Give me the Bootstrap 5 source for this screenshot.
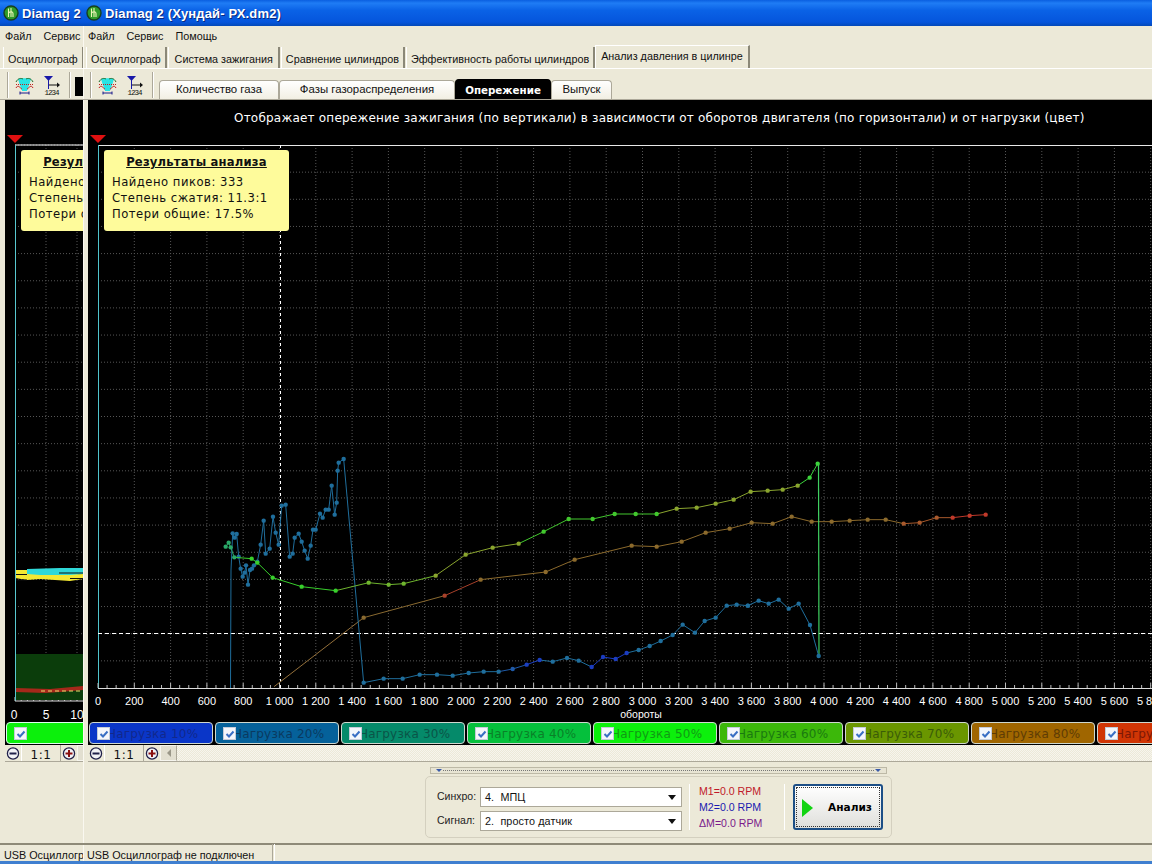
<!DOCTYPE html>
<html lang="ru">
<head>
<meta charset="utf-8">
<title>Diamag 2</title>
<link href="https://cdn.jsdelivr.net/npm/bootstrap@5.3.0/dist/css/bootstrap.min.css" rel="stylesheet">
<style>
html,body{height:100%;margin:0;overflow:hidden;background:#ece9d8;}
body{font-family:"Liberation Sans",Arial,sans-serif;font-size:10.8px;color:#111;}
.desk{width:1152px;height:864px;}
.winback{width:83px;flex:none;overflow:hidden;}
.winfront{width:1069px;flex:none;overflow:hidden;box-shadow:inset 1px 0 #faf8f0;}
.winback .inner{width:1069px;}
.titlebar{height:26px;background:linear-gradient(#0a5fe0 0,#1f7cf5 12%,#0a62e6 40%,#0555dc 85%,#0349b8 100%);color:#fff;font:bold 13px "Liberation Sans",sans-serif;letter-spacing:.15px;text-shadow:1px 1px #0a2a80;padding-left:3px;gap:3px;white-space:nowrap;}
.menubar{height:20px;padding-left:5px;gap:12px;white-space:nowrap;}
.tabrow{height:23px;border-bottom:1px solid #fff;padding:0 0 0 3px;align-items:flex-end;flex-wrap:nowrap;white-space:nowrap;}
.wintab{height:21px;padding:3px 4px 0;display:flex;align-items:center;border-left:1px solid #fff;border-right:2px solid #8b8878;margin-right:1px;background:#ece9d8;}
.wintab.roomy{padding:3px 5px 0 6px;}
.wintab.on{height:23px;margin-left:-1px;padding:0 5px 1px 5px;background:#ece9d8;border-top:1px solid #fff;}
.toolrow{height:31px;padding:2px 0 0 7px;border-bottom:1px solid #aca899;position:relative;}
.gripline{width:2px;height:26px;background:#aca899;border-right:1px solid #fff;flex:none;}
.tbicons{gap:9px;padding:0 8px 0 6px;}
.subtab{height:19px;align-self:flex-end;border:1px solid #aca899;border-bottom:0;border-radius:4px 4px 0 0;background:linear-gradient(#fff,#f2efe3);display:flex;align-items:center;justify-content:center;white-space:nowrap;font-size:11.4px;}
.subtab.on{background:#000;color:#fff;font:bold 10.3px "DejaVu Sans",sans-serif;height:20px;border-color:#000;}
.chartpane{height:645px;background:#000;margin-left:5px;position:relative;}
.capline{height:45px;color:#fff;font:12px "DejaVu Sans",sans-serif;letter-spacing:.21px;padding:11px 0 0 146px;white-space:nowrap;}
.plotsvg{display:block;overflow:visible;}
.resultbox{position:absolute;left:16px;top:50px;width:185px;height:81px;background:#fefb9b;border-radius:3px;color:#111;font:11.6px/16px "DejaVu Sans",sans-serif;padding:4px 8px;letter-spacing:.5px;white-space:nowrap;}
.resulthead{font-weight:bold;text-decoration:underline;text-align:center;margin-bottom:4px;letter-spacing:.2px;}
.legendrow{height:23px;position:absolute;left:1px;right:0;top:622px;gap:2px;overflow:hidden;white-space:nowrap;}
.loadtab{width:124px;height:22px;flex:none;border:1px solid #cfd8cf;border-radius:4px;position:relative;padding-left:17px;font:12px/22px "DejaVu Sans",sans-serif;letter-spacing:.2px;}
.tick{position:absolute;left:7px;top:4px;width:13px;height:13px;background:#f4f6fb;border:1px solid #c4cbd8;}
.tick svg{display:block;margin:.5px;}
.zoomrow{height:17px;border-bottom:1px solid #aca899;margin-left:5px;background:repeating-conic-gradient(#f7f5ee 0 25%,#ece9d8 0 50%) 0 0/2px 2px;}
.zbtn{width:16px;height:16px;background:#ece9d8;flex:none;}
.zlabel{width:40px;height:16px;overflow:hidden;text-align:center;border-left:1px solid #fff;border-right:1px solid #aca899;background:#ece9d8;font:12px/20px "DejaVu Sans",sans-serif;letter-spacing:.5px;}
.zarrow{width:17px;height:16px;background:#e2dfd0;border:1px solid #f6f5ee;border-right-color:#aca899;flex:none;}
.lowerzone{height:80px;position:relative;}
.splitbar{position:absolute;left:347px;top:5px;width:457px;height:7px;background:#e7e4d3;border:1px solid #bdb9a6;}
.splitdots{position:absolute;left:12px;right:12px;top:2px;border-top:1px dotted #777;}
.ctrlgroup{position:absolute;left:342px;top:14px;width:467px;height:62px;border:1px solid #d4d0bf;border-radius:5px;}
.fieldlabel{font-size:10.5px;width:43px;color:#222;}
.dropbox{width:202px;height:20px;background:#fff;border:1px solid #aca899;padding-left:4px;font-size:10.8px;letter-spacing:.1px;position:relative;display:flex;align-items:center;}
.droparrow{position:absolute;right:5px;top:7px;width:0;height:0;border:4px solid transparent;border-top:5px solid #111;border-bottom:0;}
.sepv{width:1px;height:46px;background:#cfcbb8;border-right:1px solid #fff;flex:none;}
.rpmline{font-size:10.6px;line-height:16px;white-space:nowrap;}
.runbtn{width:90px;height:46px;border:2px solid #1d4f86;border-radius:3px;background:linear-gradient(#fff,#dfdfdb);font:bold 10.6px "DejaVu Sans",sans-serif;color:#000;outline:1px dotted #333;outline-offset:-4px;padding:0;position:relative;}
.playmark{position:absolute;left:7px;top:13px;width:0;height:0;border-left:11px solid #12d412;border-top:9px solid transparent;border-bottom:9px solid transparent;}
.statusrow{position:absolute;left:0;top:843px;width:1152px;height:19px;border-top:2px solid #8e8a78;}
.statuscell{height:17px;line-height:21px;white-space:nowrap;}
.statusend{position:absolute;left:0;top:861px;width:1152px;height:3px;background:#3f7fd0;}
</style>
</head>
<body>
<div class="desk d-flex position-relative">

<!-- window behind -->
<section class="winback">
<div class="inner">
  <div class="titlebar d-flex align-items-center">
    <svg width="16" height="16" viewBox="0 0 16 16"><use href="#icoLogo"/></svg>
    <span>Diamag 2</span>
  </div>
  <div class="menubar d-flex align-items-center"><span>Файл</span><span>Сервис</span></div>
  <ul class="nav tabrow"><li class="wintab">Осциллограф</li></ul>
  <div class="toolrow d-flex align-items-center">
    <span class="gripline"></span>
    <span class="d-flex tbicons align-items-center">
      <svg width="19" height="19" viewBox="0 0 19 19"><use href="#icoMeter"/></svg>
      <svg width="18" height="19" viewBox="0 0 18 19"><use href="#icoScale"/></svg>
    </span>
    <span class="gripline"></span>
    <span class="d-block bg-black ms-1" style="width:12px;height:19px;margin-top:3px"></span>
  </div>
  <div class="chartpane overflow-hidden" id="backPane">
    <svg class="plotsvg position-absolute top-0 start-0" width="78" height="622" viewBox="5 100 78 622">
      <g id="backGrid"></g>
      <polygon points="15,571 27,570 27,569 60,568 83,568 83,574 70,576 40,577 15,576" fill="#2fd8d8"/>
      <polygon points="15,570 27,570 27,574 40,575 70,575 83,574 83,579 70,581 40,579 27,580 15,578" fill="#f4e832"/>
      <rect x="15" y="654" width="68" height="46" fill="#0b3d0b"/>
      <polygon points="15,688 50,689 83,686 83,690 60,692 45,693 15,692" fill="#a5281a"/>
      <path d="M15 574.5H27M59 573H83M15 580H27M70 578.5H83" stroke="#111"/>
      <path d="M41 691H83" stroke="#e8e070" stroke-dasharray="4 3"/>
      <path d="M15 145H83" stroke="#fff"/>
      <path d="M15.5 145V701" stroke="#58c8d0"/>
      <path d="M15 701H83" stroke="#ddd"/>
      <polygon points="7,135 23,135 15,143" fill="#e01010"/>
      <g fill="#fff" font-family="Liberation Sans" font-size="12" text-anchor="middle"><text x="14" y="719">0</text><text x="46" y="719">5</text><text x="77" y="719">10</text></g>
    </svg>
    <div class="resultbox" style="left:16px">
      <div class="resulthead">Результаты анализа</div>
      <div>Найдено пиков: 333</div><div>Степень сжатия: 11.3:1</div><div>Потери общие: 17.5%</div>
    </div>
    <div class="legendrow d-flex"><div class="loadtab" style="background:#0cf00c;border-color:#dfe"><span class="tick"><svg width="10" height="10" viewBox="0 0 10 10"><path d="M1.5 5l2.5 2.5L8.5 2.5" fill="none" stroke="#3a6fc4" stroke-width="2"/></svg></span></div></div>
  </div>
  <div class="zoomrow d-flex">
    <span class="zbtn"><svg width="16" height="16" viewBox="0 0 16 16"><use href="#icoMinus"/></svg></span>
    <span class="zlabel">1:1</span>
    <span class="zbtn"><svg width="16" height="16" viewBox="0 0 16 16"><use href="#icoPlus"/></svg></span>
    <span class="zarrow"></span>
  </div>
  <div class="statuscell position-absolute" style="top:845px;left:4px;width:79px;overflow:hidden">USB Осциллограф</div>
</div>
</section>

<!-- front window -->
<section class="winfront">
  <div class="titlebar d-flex align-items-center">
    <svg width="16" height="16" viewBox="0 0 16 16"><use href="#icoLogo"/></svg>
    <span>Diamag 2 (Хундай- РХ.dm2)</span>
  </div>
  <div class="menubar d-flex align-items-center"><span>Файл</span><span>Сервис</span><span>Помощь</span></div>
  <ul class="nav tabrow">
    <li class="wintab">Осциллограф</li>
    <li class="wintab roomy">Система зажигания</li>
    <li class="wintab">Сравнение цилиндров</li>
    <li class="wintab">Эффективность работы цилиндров</li>
    <li class="wintab on">Анализ давления в цилинре</li>
  </ul>
  <div class="toolrow d-flex align-items-center">
    <span class="gripline"></span>
    <span class="d-flex tbicons align-items-center">
      <svg width="19" height="19" viewBox="0 0 19 19"><use href="#icoMeter"/></svg>
      <svg width="18" height="19" viewBox="0 0 18 19"><use href="#icoScale"/></svg>
    </span>
    <span class="gripline"></span>
    <div class="d-flex align-self-end" style="margin-left:5px">
      <span class="subtab" style="width:120px">Количество газа</span>
      <span class="subtab" style="width:176px">Фазы газораспределения</span>
      <span class="subtab on" style="width:96px">Опережение</span>
      <span class="subtab" style="width:61px">Выпуск</span>
    </div>
  </div>
  <div class="chartpane">
    <div class="capline">Отображает опережение зажигания (по вертикали) в зависимости от оборотов двигателя (по горизонтали) и от нагрузки (цвет)</div>
    <svg class="plotsvg" id="plot" width="1064" height="577" viewBox="88 145 1064 577"></svg>
    <div class="resultbox">
      <div class="resulthead">Результаты анализа</div>
      <div>Найдено пиков: 333</div><div>Степень сжатия: 11.3:1</div><div>Потери общие: 17.5%</div>
    </div>
    <div class="legendrow d-flex" id="legend"></div>
  </div>
  <div class="zoomrow d-flex">
    <span class="zbtn"><svg width="16" height="16" viewBox="0 0 16 16"><use href="#icoMinus"/></svg></span>
    <span class="zlabel">1:1</span>
    <span class="zbtn"><svg width="16" height="16" viewBox="0 0 16 16"><use href="#icoPlus"/></svg></span>
    <span class="zarrow d-flex align-items-center justify-content-center"><svg width="6" height="8" viewBox="0 0 6 8"><path d="M5 0V8L1 4Z" fill="#9a9788"/></svg></span>
  </div>
  <div class="lowerzone">
    <div class="splitbar">
      <span class="splitdots"></span>
      <svg class="position-absolute" style="left:4px;top:0" width="8" height="5"><path d="M1 1H7L4 4Z" fill="#3a5aa8"/></svg>
      <svg class="position-absolute" style="right:4px;top:0" width="8" height="5"><path d="M1 1H7L4 4Z" fill="#3a5aa8"/></svg>
    </div>
    <div class="ctrlgroup d-flex align-items-center">
      <div class="d-flex flex-column" style="margin-left:11px;gap:4px;padding-top:4px">
        <div class="d-flex align-items-center"><span class="fieldlabel">Синхро:</span><span class="dropbox">4.&nbsp;&nbsp;МПЦ<i class="droparrow"></i></span></div>
        <div class="d-flex align-items-center"><span class="fieldlabel">Сигнал:</span><span class="dropbox">2.&nbsp;&nbsp;просто датчик<i class="droparrow"></i></span></div>
      </div>
      <span class="sepv" style="margin-left:7px"></span>
      <div class="rpmline" style="margin-left:9px;width:85px">
        <div style="color:#c01a2a">M1=0.0 RPM</div>
        <div style="color:#1a1ab0">M2=0.0 RPM</div>
        <div style="color:#7a1a8a">ΔM=0.0 RPM</div>
      </div>
      <span class="sepv"></span>
      <button type="button" class="btn runbtn ms-2"><span class="playmark"></span><span style="margin-left:24px">Анализ</span></button>
    </div>
  </div>
  <div class="statuscell position-absolute" style="top:845px;left:87px">USB Осциллограф не подключен</div>
</section>

<div class="statusrow"></div>
<div class="statuscell position-absolute" style="top:844px;left:272px;width:3px;border-left:1px solid #aca899;border-right:1px solid #fff"></div>
<div class="statusend"></div>
</div>

<svg width="0" height="0" class="position-absolute">
  <defs>
    <g id="icoLogo">
      <circle cx="8" cy="8" r="7" fill="#2f9c2a" stroke="#173f1f" stroke-width="1.4"/>
      <path d="M5.5 3.5V12M5.5 8c2-2 4.5-1.5 4.5 0.5V12M8 3v9" fill="none" stroke="#eef6b8" stroke-width="1.1"/>
    </g>
    <g id="icoMeter">
      <path d="M3 3C6 2 13 2 16 3L12.5 14H6.5Z" fill="#28e4e4"/>
      <rect x="7" y="12" width="5" height="3" fill="#28e4e4"/>
      <path d="M1 6C3 2 6 2 8 3M11 3C13 2 16 2 18 6" fill="none" stroke="#1a6a2a"/>
      <path d="M1 8.5H18" stroke="#c02020" stroke-dasharray="1 1"/>
      <path d="M1 12C3 8 5 12 7 13M12 13C14 12 16 8 18 12" fill="none" stroke="#c02020"/>
      <path d="M5 17H14M5 15.5V18.5M14 15.5V18.5" stroke="#1a1a8a"/>
    </g>
    <g id="icoScale">
      <path d="M1 0H10L5.5 5Z" fill="#1818a8"/>
      <path d="M5.5 4V13" stroke="#1818a8"/>
      <path d="M6 9H15" stroke="#111"/><path d="M14 6.5L17 9L14 11.5Z" fill="#111"/>
      <text x="9" y="18.5" font-family="Liberation Mono" font-size="7.5" text-anchor="middle" fill="#111" textLength="15">1234</text>
    </g>
    <g id="icoMinus">
      <circle cx="8" cy="7.5" r="5.6" fill="#f2f2f6" stroke="#20204a" stroke-width="1.3"/>
      <path d="M4.5 7.5H11.5" stroke="#20204a" stroke-width="2"/>
    </g>
    <g id="icoPlus">
      <circle cx="8" cy="7.5" r="5.6" fill="#f2f2f6" stroke="#20204a" stroke-width="1.3"/>
      <path d="M4.5 7.5H11.5M8 4V11" stroke="#8a1010" stroke-width="2"/>
    </g>
  </defs>
</svg>

<script src="https://cdn.jsdelivr.net/npm/bootstrap@5.3.0/dist/js/bootstrap.bundle.min.js"></script>
<script>
(function(){
  var NS='http://www.w3.org/2000/svg';
  function el(parent,tag,attrs,txt){var e=document.createElementNS(NS,tag);for(var k in attrs)e.setAttribute(k,attrs[k]);if(txt!=null)e.textContent=txt;parent.appendChild(e);return e;}
  var plot=document.getElementById('plot');
  var grid='#565656';
  var x0=98, yb=688, yt=145, i;
  for(i=1;i<=33;i++){var gx=x0+i*36.3;if(gx<1152)el(plot,'line',{x1:gx,y1:yt,x2:gx,y2:yb,stroke:grid,'stroke-dasharray':'1 2'});}
  for(i=1;i<20;i++){var gy=yb-i*27.15;el(plot,'line',{x1:x0,y1:gy,x2:1152,y2:gy,stroke:grid,'stroke-dasharray':'1 2'});}
  el(plot,'line',{x1:x0,y1:yt+.5,x2:1152,y2:yt+.5,stroke:'#e8e8e8'});
  el(plot,'line',{x1:x0+.5,y1:yt,x2:x0+.5,y2:yb,stroke:'#4fc4cc'});
  el(plot,'line',{x1:x0,y1:yb+.5,x2:1152,y2:yb+.5,stroke:'#ddd'});
  for(i=0;i*9.075+x0<1152;i++){var tx=x0+i*9.075;el(plot,'line',{x1:tx,y1:i%4?685:683,x2:tx,y2:yb,stroke:'#bbb'});}
  for(i=0;i<=29;i++){var v=i*200,s=v>=1000?Math.floor(v/1000)+' '+('00'+(v%1000)).slice(-3):''+v;
    el(plot,'text',{x:x0+i*36.3,y:704.5,fill:'#fff','font-family':'Liberation Sans','font-size':'11','text-anchor':'middle'},s);}
  el(plot,'text',{x:641,y:718,fill:'#fff','font-family':'Liberation Sans','font-size':'10.5','text-anchor':'middle'},'обороты');
  el(plot,'line',{x1:x0,y1:633.5,x2:1152,y2:633.5,stroke:'#fff','stroke-dasharray':'4 3'});
  el(plot,'line',{x1:280.5,y1:yt,x2:280.5,y2:yb,stroke:'#fff','stroke-dasharray':'3 3'});
  el(plot,'polygon',{points:'90,135 106,135 98,143',fill:'#e01010'});
  function z(list,ox,oy){return list.map(function(p){return [ox+p[0]/3,oy+p[1]/3];});}
  var blue=[[230.5,688],[231,570]].concat(z([[98,280],[104,293],[110,282],[116,350],[122,386],[128,410],[134,398],[138,376],[144,434],[150,390],[156,386],[162,376],[172,365],[182,314],[191,242],[197,341],[209,326],[219,230],[227,278],[236,314],[245,197],[257,194],[269,350],[278,341],[284,293],[296,281],[305,305],[314,332],[323,356],[332,317],[339,269],[347,269],[360,221],[368,233],[377,209],[386,209],[395,137],[404,224],[410,188],[413,92],[416,68],[431,57],[491,728],[551,716],[608,716],[659,704],[711,704],[758,707]],200,440),
    z([[26,699],[71,695],[116,695],[158,687],[200,674],[239,660],[278,665],[321,654],[356,662],[395,681],[429,651],[467,657],[500,639],[536,630],[569,618],[602,603],[638,585],[668,554],[705,578],[734,543],[767,533],[800,497],[830,494],[864,497]],460,440),
    z([[23,497],[56,482],[86,491],[116,479],[146,506],[176,491],[210,555],[236,648]],740,440));
  var green=z([[77,320],[86,308],[92,322],[103,352],[155,356],[172,368],[218,413],[305,440],[407,452],[506,428],[566,434],[611,431],[707,407]],200,440).concat(
    z([[17,344],[98,323],[176,311],[251,275],[326,237],[398,237],[464,222],[527,222],[590,222],[650,206],[710,203],[767,191],[821,179],[872,155]],460,440),
    z([[83,152],[128,149],[173,137],[209,113],[233,71]],740,440));
  var brown=z([[222,740],[491,533],[734,467]],200,440).concat(
    z([[62,419],[257,396],[344,359],[515,317],[590,320],[665,305],[737,278],[809,266],[875,248]],460,440),
    z([[98,251],[155,230],[215,245],[275,245],[329,242],[383,239],[437,239],[491,251],[539,248],[590,233],[638,233],[689,227],[737,224]],740,440));
  function shade(bands,x){for(var j=0;j<bands.length;j++)if(x<bands[j][0])return bands[j][1];return bands[bands.length-1][1];}
  function draw(pts,bands,noDotFirst){
    for(var j=1;j<pts.length;j++){var c=shade(bands,(pts[j-1][0]+pts[j][0])/2);
      el(plot,'line',{x1:pts[j-1][0],y1:pts[j-1][1],x2:pts[j][0],y2:pts[j][1],stroke:c,'stroke-width':1});}
    for(j=noDotFirst;j<pts.length;j++)el(plot,'circle',{cx:pts[j][0],cy:pts[j][1],r:2.2,fill:shade(bands,pts[j][0])});
  }
  draw(brown,[[360,'#94703a'],[430,'#8a6a30'],[470,'#a8402a'],[900,'#8c6a2c'],[950,'#a8592c'],[1000,'#c0392a']],1);
  el(plot,'polyline',{points:'818.5,464 819,656',stroke:'#3fd060','stroke-width':1.2,fill:'none'});
  draw(blue,[[500,'#1f6e9c'],[520,'#1f5aa8'],[545,'#1b3fc0'],[590,'#1f6e9c'],[630,'#1b3cc0'],[1000,'#1f6e9c']],2);
  draw(green,[[236,'#2aa868'],[345,'#38cf2c'],[430,'#6fb52e'],[530,'#8aa52e'],[660,'#42c82e'],[800,'#8aa52e'],[1000,'#3cd43c']],0);

  var bg=document.getElementById('backGrid');
  [46,77].forEach(function(x){el(bg,'line',{x1:x,y1:145,x2:x,y2:701,stroke:grid,'stroke-dasharray':'1 2'});});
  for(i=1;i<21;i++){var by=688-i*27.15;el(bg,'line',{x1:15,y1:by,x2:83,y2:by,stroke:grid,'stroke-dasharray':'1 2'});}
  for(i=0;i<11;i++){var bx=15+i*6.2;el(bg,'line',{x1:bx,y1:i%5?699:697,x2:bx,y2:701,stroke:'#ccc'});}

  var leg=document.getElementById('legend');
  [['#0a36c8','#11288c',10],['#05619a','#0a3a60',20],['#058a6a','#0a5548',30],['#05c03c','#0a8028',40],['#0cf00c','#109a14',50],['#3cb80a','#1a7a10',60],['#6a9600','#3a5c08',70],['#a06600','#5e3c05',80],['#d03505','#7c1805',90]].forEach(function(d){
    var t=document.createElement('div');t.className='loadtab';t.style.background=d[0];t.style.color=d[1];
    t.innerHTML='<span class="tick"><svg width="10" height="10" viewBox="0 0 10 10"><path d="M1.5 5l2.5 2.5L8.5 2.5" fill="none" stroke="#3a6fc4" stroke-width="2"/></svg></span>Нагрузка '+d[2]+'%';
    leg.appendChild(t);
  });
})();
</script>
</body>
</html>
